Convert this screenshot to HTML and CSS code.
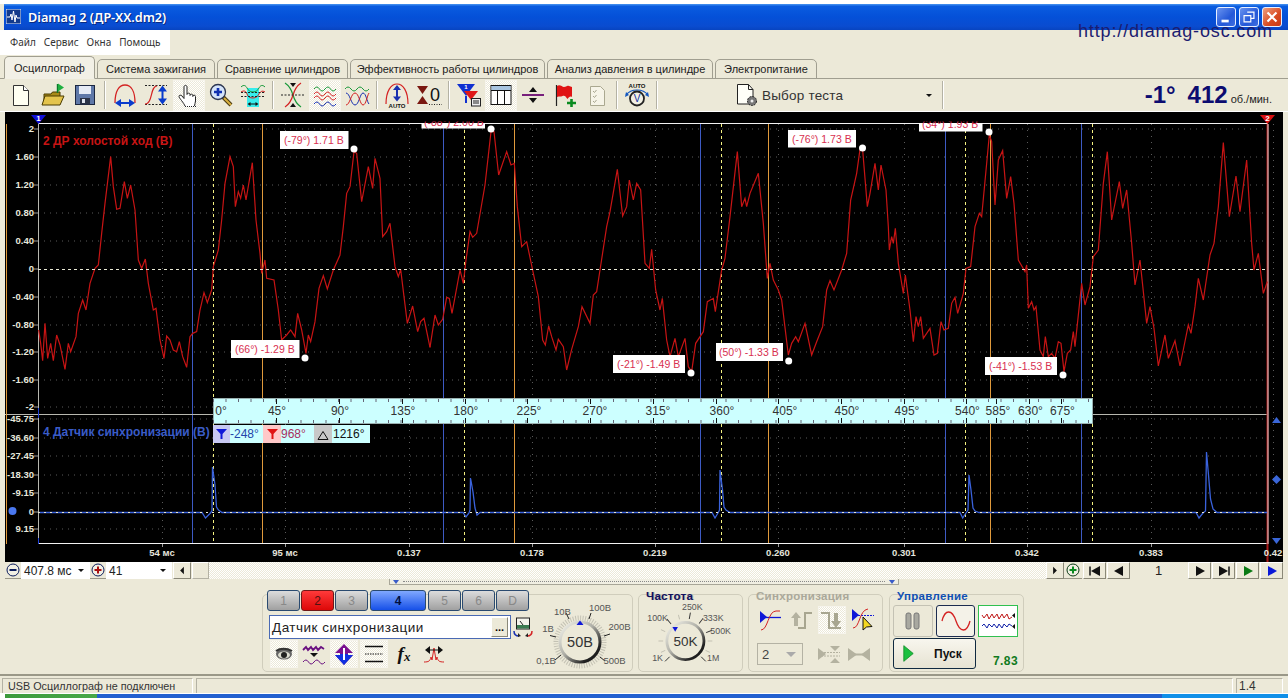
FILE: index.html
```html
<!DOCTYPE html>
<html lang="ru">

<head>
    <meta charset="UTF-8">
    <title>Diamag 2</title>
    <link rel="stylesheet" href="styles.css">
</head>

<body>
    <div class="window">
        <div class="topgap"></div>

        <header class="titlebar">
            <svg class="appicon" viewBox="0 0 15 15">
                <rect width="15" height="15" fill="#123a8c" stroke="#dfe8ff"/>
                <path d="M1 8h3l1-3 1 6 1.500-9 1.500 11 1-7 1 3h3" fill="none" stroke="#fff"/>
            </svg>
            <span class="apptitle">Diamag 2 (ДР-ХХ.dm2)</span>
            <div class="winbtns">
                <button class="winbtn"><svg viewBox="0 0 20 20"><rect x="5" y="13" width="8" height="3" fill="#fff"/></svg></button>
                <button class="winbtn"><svg viewBox="0 0 20 20"><path d="M8 4.500h7.500v7H12M4.500 8.500H12v7H4.500z" fill="none" stroke="#fff" stroke-width="1.300"/></svg></button>
                <button class="winbtn close"><svg viewBox="0 0 20 20"><path d="M5 5l10 10M15 5L5 15" stroke="#fff" stroke-width="2.400"/></svg></button>
            </div>
        </header>
        <a class="siteurl">http://diamag-osc.com</a>

        <div class="menubar">
            <nav class="menu">
                <span>Файл</span>
                <span>Сервис</span>
                <span>Окна</span>
                <span>Помощь</span>
            </nav>
        </div>

        <div class="tabs">
            <div class="tab valgt">Осциллограф</div>
            <div class="tab">Система зажигания</div>
            <div class="tab">Сравнение цилиндров</div>
            <div class="tab">Эффективность работы цилиндров</div>
            <div class="tab">Анализ давления в цилиндре</div>
            <div class="tab">Электропитание</div>
        </div>

        <div class="toolbar">
            <div class="tool"><svg viewBox="0 0 26 26"><path d="M5.500 3.500h10l5 5v15h-15z" fill="#fffff2" stroke="#333"/><path d="M15.500 3.500v5h5" fill="#fff" stroke="#333"/></svg></div>
            <div class="tool"><svg viewBox="0 0 26 26"><path d="M4 22v-10h7l1.500-2H20v12z" fill="#a88a18" stroke="#4a3c00"/><path d="M2 23l3-9h19l-4 9z" fill="#e4c44c" stroke="#4a3c00"/><path d="M17.500 2v9" stroke="#0a7a2a" stroke-width="1.400"/><path d="M18 1.500l6 4-6 4z" fill="#20b040"/></svg></div>
            <div class="tool"><svg viewBox="0 0 26 26"><rect x="3.500" y="3.500" width="19" height="19" fill="#5f78a8" stroke="#1c2740"/><rect x="7" y="4" width="12" height="8" fill="#e6ebf5"/><rect x="8" y="16" width="10" height="6.500" fill="#2b3347"/><rect x="10" y="17" width="3" height="4" fill="#dfe4ee"/></svg></div>
            <span class="sep"></span>
            <div class="tool"><svg viewBox="0 0 26 26"><path d="M3 21C3 9 7 3 13 3s10 6 10 18" fill="none" stroke="#d42222" stroke-width="1.300"/><path d="M7 21h12" stroke="#0a3ccc" stroke-width="2"/><path d="M3 21l6-4v8zM23 21l-6-4v8z" fill="#0a3ccc"/></svg></div>
            <div class="tool"><svg viewBox="0 0 26 26"><path d="M1 3.500h22M1 22.500h22" stroke="#222" stroke-dasharray="2 1.500"/><path d="M1 22c8 0 5-18 12-18" fill="none" stroke="#d42222" stroke-width="1.200"/><path d="M18.500 8v10" stroke="#0a3ccc" stroke-width="2"/><path d="M18.500 3.500l4.500 6h-9zM18.500 22.500l4.500-6h-9z" fill="#0a3ccc"/></svg></div>
            <div class="tool presset"><svg viewBox="0 0 26 26"><path d="M9 24C8 21 3 16 3 14.500c0-1.500 2-1.800 3-.5l2 2.500V5c0-2.200 3-2.200 3 0v7.500c0-1.800 3-1.800 3 0v1c0-1.800 2.800-1.800 2.800 0v1c0-1.800 2.700-1.800 2.700 0V19c0 2-1 3-1 5" fill="#fff" stroke="#222"/><path d="M9 24.500h11.500" stroke="#222" stroke-dasharray="1 1"/></svg></div>
            <div class="tool"><svg viewBox="0 0 26 26"><path d="M15 15l8 8" stroke="#4a3a10" stroke-width="4"/><path d="M16 16l7 7" stroke="#d8b040" stroke-width="2"/><circle cx="10" cy="10" r="7.500" fill="#d5e4fa" stroke="#2c3650" stroke-width="1.300"/><path d="M10 6v8M6 10h8" stroke="#1030b0" stroke-width="2.600"/></svg></div>
            <div class="tool"><svg viewBox="0 0 26 26"><rect x="7" y="6" width="12" height="19" fill="#38ecec"/><path d="M1 5c3-3 5-1 6 1s3 4 6 4 5-2 6-4 3-4 6-1" fill="none" stroke="#1a9a3a"/><path d="M1 10c3-2 5-1 6 2s3 4 6 4 5-2 6-4 3-4 6-2" fill="none" stroke="#d42222"/><path d="M1 10.500h24M1 14.500h24" stroke="#222" stroke-dasharray="2 1.500"/><path d="M9 22h8" stroke="#111"/><path d="M7.500 22l3-2v4zM18.500 22l-3-2v4z" fill="#111"/></svg></div>
            <span class="sep"></span>
            <div class="tool"><svg viewBox="0 0 26 26"><path d="M5 1c3 2 6 5 8 12s5 10 8 12" fill="none" stroke="#1a9a3a" stroke-width="1.200"/><path d="M21 1c-3 2-6 5-8 12s-5 10-8 12" fill="none" stroke="#d42222" stroke-width="1.200"/><path d="M1 13h24" stroke="#222" stroke-dasharray="2 1.500"/><path d="M10 1h6l-3 4zM10 25h6l-3-4z" fill="#111"/></svg></div>
            <div class="tool presset"><svg viewBox="0 0 26 26"><g fill="none"><path d="M2 7q3-4 5.500 0t5.500 0 5.500 0 5.500 0" stroke="#1a9a3a"/><path d="M2 12q3-4 5.500 0t5.500 0 5.500 0 5.500 0" stroke="#d42222"/><path d="M2 16q3-4 5.500 0t5.500 0 5.500 0 5.500 0" stroke="#d42222"/><path d="M2 22q3-4 5.500 0t5.500 0 5.500 0 5.500 0" stroke="#1830b0"/></g></svg></div>
            <div class="tool"><svg viewBox="0 0 26 26"><g fill="none"><path d="M1 7q3-4 6 0t6 0 6 0 6 0" stroke="#1a9a3a"/><path d="M2 11c4 0 5 12 9 12s5-12 8-12 4 9 6 11" stroke="#1830b0"/><path d="M2 23c4 0 5-12 9-12s5 12 8 12 4-9 6-12" stroke="#d42222"/></g></svg></div>
            <span class="sep"></span>
            <div class="tool"><svg viewBox="0 0 26 26"><path d="M2 22C2 9 7 2 13 2s11 7 11 20" fill="none" stroke="#d42222" stroke-width="1.200"/><path d="M13 6v11" stroke="#1830b0" stroke-width="2"/><path d="M13 3l4 5H9zM13 19.500l4-5H9z" fill="#1830b0"/><text class="tinyauto" x="13" y="26" text-anchor="middle">AUTO</text></svg></div>
            <div class="tool"><svg viewBox="0 0 26 26"><path d="M1 4h11L6.500 12zM1 22h11l-5.500-8z" fill="#7a1810"/><text class="bigzero" x="19" y="19" text-anchor="middle">0</text><path d="M13 22.500h13" stroke="#222" stroke-dasharray="1 1.500"/></svg></div>
            <span class="sep"></span>
            <div class="tool"><svg viewBox="0 0 26 26"><path d="M1 2h18L10 14z" fill="#1030d0"/><path d="M8 9h14l-7 9z" fill="#e01818"/><path d="M10 14v7" stroke="#1030d0" stroke-width="2"/><text class="tinyone" x="10" y="7">1</text><rect x="15.500" y="16.500" width="9" height="7.500" fill="#eee" stroke="#222"/><path d="M18 18v4M20 18v4M22 18v4" stroke="#222"/></svg></div>
            <div class="tool presset"><svg viewBox="0 0 26 26"><rect x="3" y="3.500" width="20" height="19" fill="#fff" stroke="#111"/><rect x="3.500" y="4" width="19" height="4" fill="#a8c4e0"/><path d="M3 8.500h20M9.500 8.500v14M16.500 8.500v14" stroke="#111"/></svg></div>
            <div class="tool"><svg viewBox="0 0 26 26"><path d="M2 13h22" stroke="#78207c" stroke-width="2"/><path d="M13 5l4 5H9zM13 21l4-5H9z" fill="#111"/></svg></div>
            <div class="tool"><svg viewBox="0 0 26 26"><path d="M4.500 3v21" stroke="#222" stroke-width="1.200"/><path d="M5 4c3-2 5 1 7 1s3-2 5-1l3 1v10c-2-1-3 0-4.500 2-2-3-3-4-5-3s-3 0-5.500 1z" fill="#e01414"/><path d="M15 21h9M19.500 17v8" stroke="#0a8a20" stroke-width="2.600"/></svg></div>
            <div class="tool"><svg viewBox="0 0 26 26"><path d="M6.500 4.500h10l4 4v15h-14z" fill="#f6f4e8" stroke="#aaa890"/><path d="M9 9l1.500 1.500 2-2.500M9 14l1.500 1.500 2-2.500M9 19l1.500 1.500 2-2.500" fill="none" stroke="#a8a690"/></svg></div>
            <span class="sep"></span>
            <div class="tool"><svg viewBox="0 0 26 26"><text class="tinyauto" x="13" y="6" text-anchor="middle">AUTO</text><path d="M2 13c3-4 7-5 11-5s8 1 11 5" fill="none" stroke="#1458c0" stroke-width="1.200"/><path d="M1 15l1-5 3 3zM25 15l-1-5-3 3z" fill="#1458c0"/><circle cx="13" cy="16.500" r="7" fill="#f2f0e4" stroke="#222" stroke-width="1.800"/><text class="tinyvolt" x="13" y="20" text-anchor="middle">V</text></svg></div>
            <span class="sep"></span>

            <div class="testselect">
                <svg viewBox="0 0 24 24"><path d="M2.500 1.500h11l4.500 5V21H2.500z" fill="#fffff8" stroke="#222"/><path d="M13.500 1.500v5H18" fill="none" stroke="#222"/><circle cx="17" cy="18" r="4.500" fill="#777" stroke="#222" stroke-dasharray="2 1"/><circle cx="17" cy="18" r="1.500" fill="#eee"/></svg>
                <span class="testname">Выбор теста</span>
                <span class="ddarrow"></span>
            </div>
            <span class="sep"></span>

            <div class="readout">
                <b>-1°</b><b class="rpm">412</b><small>об./мин.</small>
            </div>
        </div>

        <svg class="scope" viewBox="0 112 1288 450">
            <rect x="5" y="112" width="1278" height="450" fill="#000"/>

            <path class="griddot" d="M38 129H1268M38 157H1268M38 185H1268M38 213H1268M38 241H1268M38 297H1268M38 325H1268M38 352H1268M38 380H1268M38 407H1268M38 419H1268M38 438H1268M38 456H1268M38 475H1268M38 493H1268M38 529H1268"/>
            <path class="griddot" d="M162.500 124V543M285.500 124V543M409.500 124V543M532.500 124V543M655.500 124V543M778.500 124V543M904.500 124V543M1027.500 124V543M1151.500 124V543M1273.500 124V543"/>

            <path class="tick" d="M162.500 543v4M285.500 543v4M409.500 543v4M532.500 543v4M655.500 543v4M778.500 543v4M904.500 543v4M1027.500 543v4M1151.500 543v4"/>
            <path class="tick" d="M34 129h4M34 157h4M34 185h4M34 213h4M34 241h4M34 269h4M34 297h4M34 325h4M34 352h4M34 380h4M34 407h4M34 419h4M34 438h4M34 456h4M34 475h4M34 493h4M34 512h4M34 529h4"/>

            <path class="cur-blue" d="M192.500 124V543M443.500 124V543M700.500 124V543M945.500 124V543M1081.500 124V543"/>
            <path class="cur-orange" d="M262.500 124V543M514.500 124V543M768.500 124V543M990.500 124V543"/>
            <path class="cur-yellow" d="M213.500 124V543M464.500 124V543M721.500 124V543M965.500 124V543M1092.500 124V543"/>

            <line class="frame" x1="38" y1="123.500" x2="1268" y2="123.500"/>
            <line class="frame" x1="38" y1="543.500" x2="1268" y2="543.500"/>
            <line class="panelline" x1="38.500" y1="124" x2="38.500" y2="543"/>
            <line class="panelline" x1="5" y1="414.500" x2="1268" y2="414.500"/>
            <line class="cur-orange" x1="6.500" y1="124" x2="6.500" y2="544"/>
            <line class="chanstub" x1="38.500" y1="408" x2="38.500" y2="418"/>
            <line class="chanstub" x1="38.500" y1="538" x2="38.500" y2="544"/>
            <line class="rightred" x1="1267.500" y1="124" x2="1267.500" y2="562"/>
            <line class="rightcore" x1="1268" y1="124" x2="1268" y2="544"/>

            <!-- sporet er ridset af i 3x koordinater -->
            <g class="trace" transform="translate(0 110) scale(.33333)">
                <polyline points="116,660 122,700 128,752 135,640 143,745 152,700 160,752 170,675 180,705 195,778 205,700 212,725 228,680 235,610 248,570 258,600 270,520 285,475 295,465 305,370 315,280 332,140 340,230 350,298 360,295 373,215 382,265 392,225 405,300 415,450 425,475 436,447 445,520 460,600 468,595 480,690 492,745 500,678 510,690 520,720 530,725 538,695 548,740 560,772 570,680 578,670 590,665 600,600 612,548 622,578 635,540 640,470 655,420 665,330 675,220 690,140 700,170 706,290 715,245 722,265 730,225 738,270 757,158 768,330 780,430 785,490 795,450 800,505 822,510 835,600 845,690 860,675 872,660 885,680 893,610 905,660 918,730 925,675 932,695 945,635 957,535 970,497 982,537 1000,480 1020,435 1030,350 1040,250 1050,230 1062,125 1070,130 1085,275 1105,170 1118,235 1125,145 1140,205 1148,380 1160,365 1170,340 1185,470 1195,500 1202,478 1212,560 1222,640 1238,588 1253,665 1262,635 1272,625 1290,712"/>
            </g>
            <g class="trace" transform="translate(430 110) scale(.33333)">
                <polyline points="0,712 15,615 25,645 38,628 50,562 58,565 66,610 90,480 100,520 108,450 120,365 128,382 140,370 165,225 183,65 192,65 206,195 230,125 243,165 253,160 262,290 275,410 290,395 310,490 325,560 338,690 346,705 356,648 365,680 378,720 385,688 400,710 410,780 425,718 445,650 456,590 480,640 490,555 500,545 510,480 530,350 540,305 562,178 578,318 590,290 598,210 610,270 620,220 632,240 645,460 658,475 665,418 677,540 690,600 697,565 710,690 720,740 735,685 745,740 765,685 775,770 785,785 797,700 820,665 832,575 850,565 856,605 875,480 885,445 900,320 922,125 935,290 945,265 950,290 960,250 985,190 1000,340 1012,505 1020,460 1030,510 1045,540 1055,570 1075,735 1085,700 1097,680 1105,695 1125,640 1145,735 1160,695 1178,650 1190,540 1200,512 1212,540 1235,480 1250,430 1262,270 1280,190 1290,118"/>
            </g>
            <g class="trace" transform="translate(860 110) scale(.33333)">
                <polyline points="0,118 8,120 22,290 30,250 45,160 55,240 63,165 78,240 85,350 88,420 95,380 100,400 106,355 115,460 130,550 136,495 150,600 160,695 168,620 175,650 182,620 190,685 210,655 222,735 232,730 243,635 252,660 265,655 275,580 285,562 293,610 310,550 318,475 332,470 345,350 358,310 365,320 388,75 395,95 405,285 415,150 428,122 440,265 452,200 462,280 475,450 495,485 500,465 505,595 515,575 522,600 528,590 540,720 550,740 556,680 565,740 575,730 585,745 595,695 603,700 612,785 622,730 632,720 640,665 645,710 665,520 675,585 690,530 700,440 715,420 730,220 742,125 755,330 778,215 788,295 800,240 815,400 825,525 840,450 850,545 860,640 870,590 882,655 895,768 915,675 925,745 945,692 960,768 985,645 993,670 1005,590 1015,505 1030,570 1050,435 1062,400 1075,290 1090,98 1108,320 1128,198 1140,305 1160,150 1175,400 1182,480 1195,430 1210,550 1222,515"/>
            </g>

            <polyline class="pulse" points="39,512.500 202,512.500 205.500,518 210,513.500 212,511 212.500,467 215,485 216.500,507 218.500,510 222,512.500 463,512.500 466,517 469,513 470,510 470.500,478 473,492 475,508 477,515 480,512.500 712,512.500 715,518 718,513 719.500,510 720,470 722.500,490 724,507 726,510 730,512.500 960,512.500 962.700,518 966,513 968,510 969,475 971,490 973,508 975,511 979,512.500 1196,512.500 1199,518 1203,513 1205.500,511 1206.500,452 1208.500,475 1210.500,499 1213,509 1217,512.500 1267,512.500"/>

            <line class="zerodash" x1="38" y1="269.500" x2="1268" y2="269.500"/>
            <line class="zerodash lower" x1="38" y1="512.500" x2="1268" y2="512.500"/>

            <g class="ylab">
                <text x="34" y="132">2</text>
                <text x="34" y="160">1.60</text>
                <text x="34" y="188">1.20</text>
                <text x="34" y="216">0.80</text>
                <text x="34" y="244">0.40</text>
                <text x="34" y="272">0</text>
                <text x="34" y="300">-0.40</text>
                <text x="34" y="328">-0.80</text>
                <text x="34" y="355">-1.20</text>
                <text x="34" y="383">-1.60</text>
                <text x="34" y="410">-2</text>
                <text x="34" y="422">-45.75</text>
                <text x="34" y="441">-36.60</text>
                <text x="34" y="459">-27.45</text>
                <text x="34" y="478">-18.30</text>
                <text x="34" y="496">-9.15</text>
                <text x="34" y="515">0</text>
                <text x="34" y="532">9.15</text>
            </g>

            <g class="xlab">
                <text x="162" y="556">54 мс</text>
                <text x="285" y="556">95 мс</text>
                <text x="409" y="556">0.137</text>
                <text x="532" y="556">0.178</text>
                <text x="655" y="556">0.219</text>
                <text x="778" y="556">0.260</text>
                <text x="904" y="556">0.301</text>
                <text x="1027" y="556">0.342</text>
                <text x="1151" y="556">0.383</text>
                <text x="1273" y="556">0.42</text>
            </g>

            <text class="chan chan-red" x="43" y="145">2 ДР холостой ход (В)</text>
            <text class="chan chan-blue" x="43" y="436">4 Датчик синхронизации (В)</text>

            <!-- gradskala -->
            <rect class="ruler" x="213.500" y="398.500" width="879" height="25"/>
            <line class="rulertick" x1="213" y1="400.500" x2="1092" y2="400.500"/>
            <line class="rulertick" x1="213" y1="421.500" x2="1092" y2="421.500"/>
            <path class="rulermajor" d="M276.500 399v5M339.500 399v5M402.500 399v5M465.500 399v5M527.500 399v5M590.500 399v5M653.500 399v5M716.500 399v5M778.500 399v5M841.500 399v5M904.500 399v5M966.500 399v5M996.500 399v5M1029.500 399v5M1061.500 399v5M276.500 418v5M339.500 418v5M402.500 418v5M465.500 418v5M527.500 418v5M590.500 418v5M653.500 418v5M716.500 418v5M778.500 418v5M841.500 418v5M904.500 418v5M966.500 418v5M996.500 418v5M1029.500 418v5M1061.500 418v5"/>
            <g class="deg">
                <text x="221" y="415">0°</text>
                <text x="277" y="415">45°</text>
                <text x="340" y="415">90°</text>
                <text x="403" y="415">135°</text>
                <text x="466" y="415">180°</text>
                <text x="529" y="415">225°</text>
                <text x="595" y="415">270°</text>
                <text x="658" y="415">315°</text>
                <text x="722" y="415">360°</text>
                <text x="785" y="415">405°</text>
                <text x="847" y="415">450°</text>
                <text x="907" y="415">495°</text>
                <text x="967.500" y="415">540°</text>
                <text x="998" y="415">585°</text>
                <text x="1030.500" y="415">630°</text>
                <text x="1062.500" y="415">675°</text>
            </g>

            <!-- vinkler under skalaen -->
            <rect x="213" y="425" width="17" height="18" fill="#c8c8f2"/>
            <rect x="230" y="425" width="33" height="18" fill="#ccffff"/>
            <rect x="263" y="425" width="18" height="18" fill="#ffc8c8"/>
            <rect x="281" y="425" width="33" height="18" fill="#ccffff"/>
            <rect x="314" y="425" width="18" height="18" fill="#c8c8c8"/>
            <rect x="332" y="425" width="38" height="18" fill="#ccffff"/>
            <path d="M216 429h11l-4.500 5v5h-2v-5z" fill="#1018d8"/>
            <path d="M267 429h11l-4.500 5v5h-2v-5z" fill="#e01414"/>
            <path d="M318 439.500h10l-5-8z" fill="none" stroke="#111"/>
            <text class="anglet" x="230" y="438" fill="#2244aa">-248°</text>
            <text class="anglet" x="281" y="438" fill="#a83060">968°</text>
            <text class="anglet" x="333" y="438" fill="#111">1216°</text>

            <!-- maerker paa sporet -->
            <g class="marklabel">
                <rect x="280" y="131" width="68.500" height="18"/>
                <rect x="231" y="340" width="68.500" height="18"/>
                <rect x="613" y="355" width="72" height="18"/>
                <rect x="716" y="343" width="67" height="18"/>
                <rect x="788" y="130" width="68" height="17.500"/>
                <rect x="421.500" y="123" width="63.500" height="5.500"/>
                <rect x="919" y="123" width="63.500" height="8.500"/>
                <rect x="985" y="357" width="72" height="18"/>
                <text x="284" y="144">(-79°) 1.71 В</text>
                <text x="235" y="353">(66°) -1.29 В</text>
                <text x="617" y="368">(-21°) -1.49 В</text>
                <text x="719" y="356">(50°) -1.33 В</text>
                <text x="792" y="143">(-76°) 1.73 В</text>
                <text x="989" y="370">(-41°) -1.53 В</text>
                <text x="424" y="126">(-88°) 2.00 В</text>
                <text x="922" y="128">(34°) 1.93 В</text>
            </g>
            <rect x="420" y="112" width="70" height="9.500" fill="#000"/>
            <rect x="916" y="112" width="70" height="9.500" fill="#000"/>
            <g class="markdot">
                <circle cx="354" cy="149" r="3.500"/>
                <circle cx="305" cy="358" r="3.500"/>
                <circle cx="691" cy="373" r="3.500"/>
                <circle cx="788.700" cy="361" r="3.500"/>
                <circle cx="862.500" cy="148" r="3.500"/>
                <circle cx="491" cy="129" r="3.500"/>
                <circle cx="989" cy="132" r="3.500"/>
                <circle cx="1063" cy="375" r="3.500"/>
            </g>

            <!-- kanalflag -->
            <path d="M31 115h15l-7.500 9z" fill="#1010d8"/>
            <text class="flagnum" x="38.500" y="121">1</text>
            <path d="M1260 115h15l-7.500 9z" fill="#d81010"/>
            <text class="flagnum" x="1267.500" y="121">2</text>
            <circle cx="12.500" cy="511" r="4" fill="#4a78f0"/>
            <path d="M1272 423l4.500-6 4.500 6z" fill="#3a66d8"/>
            <path d="M1276.500 475l4.500 4.500-4.500 4.500-4.500-4.500z" fill="#3a66d8"/>
            <path d="M1272 538l4.500 6 4.500-6z" fill="#3a66d8"/>
        </svg>

        <div class="scrollrow">
            <button class="roundbtn"><svg viewBox="0 0 14 14"><circle cx="7" cy="7" r="6" fill="#f2f0e4" stroke="#0b1c5c"/><path d="M3.500 7h7" stroke="#0b1c5c" stroke-width="2"/></svg></button>
            <div class="scrollcombo combo-ms"><span>407.8 мс</span><i class="ddarrow"></i></div>
            <button class="roundbtn"><svg viewBox="0 0 14 14"><circle cx="7" cy="7" r="6" fill="#f2f0e4" stroke="#0b1c5c"/><path d="M3.500 7h7M7 3.500v7" stroke="#a81010" stroke-width="2"/></svg></button>
            <div class="scrollcombo combo-n"><span>41</span><i class="ddarrow"></i></div>
            <button class="rawbtn leftbtn"><svg viewBox="0 0 16 16"><path d="M6 8l4-4v8z" fill="#111"/></svg></button>
            <div class="thumb"></div>
            <div class="track"></div>
            <button class="rawbtn rightbtn"><svg viewBox="0 0 16 16"><path d="M10 8L6 4v8z" fill="#111"/></svg></button>
            <button class="roundbtn greenplus"><svg viewBox="0 0 14 14"><circle cx="7" cy="7" r="6" fill="#f2f0e4" stroke="#0a3a14"/><path d="M3.500 7h7M7 3.500v7" stroke="#0a8a20" stroke-width="2"/></svg></button>
            <button class="navbtn"><svg viewBox="0 0 20 14"><path d="M5 2.500v9" stroke="#111" stroke-width="1.500"/><path d="M6 7l9-5v10z" fill="#111"/></svg></button>
            <button class="navbtn"><svg viewBox="0 0 20 14"><path d="M5 7l9-5v10z" fill="#111"/></svg></button>
            <div class="pagenum">1</div>
            <button class="navbtn"><svg viewBox="0 0 20 14"><path d="M15 7L6 2v10z" fill="#111"/></svg></button>
            <button class="navbtn"><svg viewBox="0 0 20 14"><path d="M15 2.500v9" stroke="#111" stroke-width="1.500"/><path d="M14 7L5 2v10z" fill="#111"/></svg></button>
            <button class="navbtn"><svg viewBox="0 0 20 14"><path d="M15 7L6 2v10z" fill="#0a7a14"/></svg></button>
            <button class="navbtn"><svg viewBox="0 0 20 14"><path d="M15 7L6 2v10z" fill="#0a18d8"/></svg></button>
        </div>

        <div class="panel">
            <div class="splitter">
                <i class="splitarrow"></i>
                <i class="splitdots"></i>
                <i class="splitarrow"></i>
            </div>
            <div class="groups">
                <section class="group group-chan">
                    <div class="chancol">
                        <div class="channels">
                            <button class="chbtn">1</button>
                            <button class="chbtn red">2</button>
                            <button class="chbtn">3</button>
                            <button class="chbtn blue wide">4</button>
                            <button class="chbtn">5</button>
                            <button class="chbtn">6</button>
                            <button class="chbtn">D</button>
                        </div>
                        <div class="chanselect">
                            <div class="chancombo">
                                <span>Датчик синхронизации</span>
                                <button class="dots">...</button>
                            </div>
                            <svg class="meter" viewBox="0 0 20 20"><rect x="3.500" y="1" width="13" height="11" fill="#f4f4ec" stroke="#222"/><rect x="4" y="8" width="12" height="3.500" fill="#3a7a50"/><path d="M10 8l-3-4" stroke="#222"/><path d="M1 14c0 3 2 5 5 5" fill="none" stroke="#1830b0" stroke-width="1.500"/><path d="M19 14c0 3-2 5-5 5" fill="none" stroke="#d42222" stroke-width="1.500"/><path d="M5 16l3 3-3 1zM15 16l-3 3 3 1z" fill="#222"/></svg>
                        </div>
                        <div class="chantools">
                            <div class="smalltool presset"><svg viewBox="0 0 24 24"><ellipse cx="12" cy="12" rx="8" ry="5.500" fill="#666"/><ellipse cx="12" cy="13" rx="6" ry="3.500" fill="#dcdcd0"/><circle cx="12" cy="13" r="3" fill="#222"/><path d="M4 9c4-3 11-3 16 0" fill="none" stroke="#333" stroke-width="2"/></svg></div>
                            <div class="smalltool"><svg viewBox="0 0 24 24"><path d="M1 8l3-3 2 3 3-3 2 3 3-3 2 3 3-3 3 2" fill="none" stroke="#6a1080" stroke-width="1.800"/><path d="M8 11h8l-4 4z" fill="#111"/><path d="M1 20q3-4 5.500 0t5.500 0 5.500 0 5.500 0" fill="none" stroke="#6a1080"/></svg></div>
                            <div class="smalltool presset"><svg viewBox="0 0 24 24"><path d="M12 2l9 9h-5v2h5l-9 10-9-10h5v-2H3z" fill="#7a1090"/><path d="M12 23l-9-10h5v-1h8v1h5z" fill="#1030e0"/><path d="M12 6v12" stroke="#fff" stroke-width="2"/></svg></div>
                            <div class="smalltool presset"><svg viewBox="0 0 24 24"><path d="M3 4.500h18M3 19.500h18" stroke="#111" stroke-width="1.500"/><path d="M3 12h18" stroke="#111" stroke-dasharray="1.500 1"/></svg></div>
                            <div class="smalltool fx"><i>f</i><sub>x</sub></div>
                            <div class="smalltool"><svg viewBox="0 0 24 24"><path d="M2 20c5 0 6-1 7-5l1 3 2-12 2 12 1-3c1 4 2 5 7 5" fill="none" stroke="#d42222"/><path d="M7 8h10" stroke="#111"/><path d="M3 8l5-4v8zM21 8l-5-4v8z" fill="#111"/></svg></div>
                        </div>
                    </div>
                    <svg class="dial dial-volt" viewBox="535 595 97 77">
                        <defs>
                            <linearGradient id="ringfarve" x1="0" y1="0" x2="1" y2="1">
                                <stop offset="0" stop-color="#f8f8f0"/>
                                <stop offset=".45" stop-color="#b0b0a8"/>
                                <stop offset=".8" stop-color="#222"/>
                                <stop offset="1" stop-color="#111"/>
                            </linearGradient>
                        </defs>
                        <circle cx="580" cy="642" r="24" fill="none" stroke="#c4c2b4" stroke-width="5" stroke-dasharray="1 1.500"/>
                        <circle cx="580" cy="642" r="20" fill="#ece9d8" stroke="url(#ringfarve)" stroke-width="3"/>
                        <path d="M561 655l-6 5M556 637l-6-1.500M569 619l-3-6M589 619l2-6M604 636l6-2M600 657l5 4" stroke="#222"/>
                        <path d="M580 620.500l3.500 4.500h-7z" fill="#1018d8"/>
                        <text class="dialvalue" x="580" y="647">50В</text>
                        <g class="diallab">
                            <text x="546" y="664">0,1В</text>
                            <text x="548" y="632">1В</text>
                            <text x="562.500" y="615">10В</text>
                            <text x="600" y="611">100В</text>
                            <text x="619.500" y="630">200В</text>
                            <text x="614.500" y="664">500В</text>
                        </g>
                    </svg>
                </section>

                <section class="group group-freq">
                    <h3 class="legend navy">Частота</h3>
                    <svg class="dial" viewBox="639 602 103 70">
                        <g transform="translate(685 644)">
                            <g class="dialtick">
                                <line y1="-24" y2="-29" transform="rotate(-115)"/>
                                <line y1="-24" y2="-29" transform="rotate(-90)"/>
                                <line y1="-24" y2="-29" transform="rotate(-65)"/>
                                <line y1="-24" y2="-29" transform="rotate(-15)"/>
                                <line y1="-24" y2="-29" transform="rotate(115)"/>
                                <line y1="-24" y2="-29" transform="rotate(90)"/>
                            </g>
                            <g class="dialtick major">
                                <line y1="-24" y2="-31" transform="rotate(-135)"/>
                                <line y1="-24" y2="-31" transform="rotate(-40)"/>
                                <line y1="-24" y2="-31" transform="rotate(10)"/>
                                <line y1="-24" y2="-31" transform="rotate(38)"/>
                                <line y1="-24" y2="-31" transform="rotate(68)"/>
                                <line y1="-24" y2="-31" transform="rotate(135)"/>
                            </g>
                            <circle r="20" fill="#ece9d8" stroke="url(#ringfarve)" stroke-width="3"/>
                            <path d="M-14-17l3 5 3-5z" transform="translate(0 2)" fill="#1018d8"/>
                            <text class="dialvalue" y="5">50K</text>
                        </g>
                        <g class="diallab">
                            <text x="655" y="666">1K</text>
                            <text x="655" y="622">100K</text>
                            <text x="692.500" y="611">250K</text>
                            <text x="715" y="622">333K</text>
                            <text x="723" y="636">500K</text>
                            <text x="715" y="666">1M</text>
                        </g>
                    </svg>
                </section>

                <section class="group group-sync">
                    <h3 class="legend grey">Синхронизация</h3>
                    <div class="syncrow">
                        <div class="smalltool syncbtn"><svg viewBox="0 0 24 24"><path d="M2 3v12l7-6z" fill="#1018d8"/><path d="M2 9.500h21" stroke="#1018d8" stroke-width="1.300"/><path d="M3 22c7 0 7-19 15-19h4" fill="none" stroke="#d42222"/></svg></div>
                        <div class="smalltool syncbtn"><svg viewBox="0 0 24 24"><path d="M9 20h7V5h7" fill="none" stroke="#a8a690" stroke-width="2"/><path d="M7 4l5 6H9v8H5v-8H2z" fill="#b4b2a0"/></svg></div>
                        <div class="smalltool syncbtn presset"><svg viewBox="0 0 24 24"><path d="M1 5h8v15h12" fill="none" stroke="#a8a690" stroke-width="2"/><path d="M16 20l-5-7h3V5h4v8h3z" fill="#a8a690"/></svg></div>
                        <div class="smalltool syncbtn"><svg viewBox="0 0 24 24"><path d="M1 1v12l7-6z" fill="#1018d8"/><path d="M1 7.500h22" stroke="#1018d8" stroke-dasharray="2 1"/><path d="M2 20c7 0 6-18 15-19" fill="none" stroke="#d42222"/><path d="M12 9v13l3.500-3 5.500-.5z" fill="#f4d820" stroke="#111"/></svg></div>
                    </div>
                    <div class="syncrow second">
                        <div class="synccombo"><span>2</span><i class="ddarrow grey"></i></div>
                        <div class="smalltool syncbtn"><svg viewBox="0 0 24 24"><path d="M1 6l8 6-8 6zM3 9l4 3-4 3" fill="#b4b2a0"/><path d="M1 10.500h22M1 14h22" stroke="#b4b2a0" stroke-dasharray="2 1"/><path d="M13 4h10l-5 5zM13 21h10l-5-5z" fill="#b4b2a0"/></svg></div>
                        <div class="smalltool syncbtn"><svg viewBox="0 0 24 24"><path d="M1 6l9 6.500-9 6.500zM23 6l-9 6.500 9 6.500z" fill="#b4b2a0"/><path d="M8 12.500h8" stroke="#b4b2a0" stroke-width="2"/></svg></div>
                    </div>
                </section>

                <section class="group group-ctrl">
                    <h3 class="legend royal">Управление</h3>
                    <div class="ctrlrow">
                        <button class="ctrlbtn flat"><svg viewBox="0 0 24 24"><rect x="5" y="4" width="5" height="16" rx="2" fill="#a8a8a0" stroke="#777"/><rect x="13" y="4" width="5" height="16" rx="2" fill="#a8a8a0" stroke="#777"/></svg></button>
                        <button class="ctrlbtn dark"><svg viewBox="0 0 32 24"><path d="M2 12c3-12 10-12 14 0s11 12 14 0" fill="none" stroke="#d42222" stroke-width="1.300"/></svg></button>
                        <button class="ctrlbtn scopebtn"><svg viewBox="0 0 36 24"><path d="M2 6l2 3 3-4 2 5 3-5 2 4 3-4 2 5 3-5 2 4 3-4 2 5 3-2" fill="none" stroke="#c01818"/><path d="M2 17l2-2 3 4 2-4 3 3 2-3 3 4 2-4 3 4 2-4 3 3 2-3 3 2" fill="none" stroke="#1020a8"/><path d="M35 4v5l-3-2.500zM35 15v5l-3-2.500z" fill="#111"/></svg></button>
                    </div>
                    <div class="ctrlrow lower">
                        <button class="startbtn"><svg viewBox="0 0 14 24"><path d="M1 2l12 10L1 22z" fill="#1cc040" stroke="#0a8a20"/></svg><span>Пуск</span></button>
                        <b class="speed">7.83</b>
                    </div>
                </section>
            </div>
        </div>

        <footer class="statusbar">
            <div class="pane pane-a">USB Осциллограф не подключен</div>
            <div class="pane pane-b"></div>
            <div class="pane pane-c">1.4</div>
        </footer>
        <div class="taskbar"><div class="startstrip"></div><div class="taskstrip"></div></div>
    </div>
</body>

</html>
```

FILE: styles.css
```css
* {
    box-sizing: border-box;
}

html,
body {
    margin: 0;
    height: 698px;
    overflow: hidden;
}

body {
    font-family: "Liberation Sans", Arial, sans-serif;
    font-size: 11px;
    color: #222;
    background-color: #ece9d8;
}

button {
    padding: 0;
    font: inherit;
    background: none;
    border: none;
}

svg {
    display: block;
}

.window {
    position: relative;
    display: flex;
    flex-direction: column;
    width: 1288px;
    height: 698px;
}

.topgap {
    height: 4px;
    background-color: #fff;
}

/* titellinje */
.titlebar {
    display: flex;
    align-items: center;
    height: 26px;
    margin-left: 4px;
    padding-left: 2px;
    background: linear-gradient(#4a96f0 0, #0a5ce0 9%, #0450d8 50%, #0a4cd0 85%, #0844c0 100%);
}

.appicon {
    width: 15px;
    height: 15px;
}

.apptitle {
    margin-left: 7px;
    font-family: "Noto Sans", sans-serif;
    font-size: 12.700px;
    font-weight: 600;
    color: #fff;
    text-shadow: 1px 1px #0a2a80;
}

.winbtns {
    display: flex;
    gap: 3px;
    margin-left: auto;
    margin-right: 6px;
}

.winbtn {
    width: 20px;
    height: 20px;
    border: 1px solid #e8f0ff;
    border-radius: 3px;
    background: linear-gradient(135deg, #6a94f0, #2458d8 60%, #3f6ee0);
}

.winbtn.close {
    background: linear-gradient(135deg, #f0a080, #d84a20 60%, #c83a18);
}

.siteurl {
    position: absolute;
    top: 21px;
    left: 1078px;
    font-size: 18px;
    letter-spacing: .85px;
    color: #1c1c70;
}

/* menu */
.menubar {
    height: 27px;
}

.menu {
    display: flex;
    align-items: center;
    width: 170px;
    height: 25px;
    padding-left: 10px;
    gap: 8px;
    font-family: "Noto Sans", sans-serif;
    font-size: 10px;
    color: #333;
    background-color: #fff;
}

/* faner */
.tabs {
    display: flex;
    align-items: flex-end;
    gap: 2px;
    height: 23px;
    padding-left: 4px;
    border-bottom: 1px solid #a09e90;
}

.tab {
    display: flex;
    align-items: center;
    justify-content: center;
    height: 20px;
    margin-bottom: -1px;
    font-size: 11px;
    white-space: nowrap;
    color: #222;
    border: 1px solid #a09e90;
    border-radius: 5px 5px 0 0;
}

.tab:nth-child(2) {
    width: 118px;
}

.tab:nth-child(3) {
    width: 131px;
}

.tab:nth-child(4) {
    width: 195px;
}

.tab:nth-child(5) {
    width: 166px;
}

.tab:nth-child(6) {
    width: 102px;
}

.tab.valgt {
    width: 91px;
    height: 23px;
    background-color: #f2f0e6;
    border-bottom-color: #f2f0e6;
}

/* vaerktoejslinje */
.toolbar {
    display: flex;
    align-items: center;
    height: 33px;
    padding-left: 5px;
    border-bottom: 1px solid #fff;
}

.tool {
    display: flex;
    align-items: center;
    justify-content: center;
    width: 32px;
    height: 31px;
}

.tool svg {
    width: 26px;
    height: 26px;
}

.presset {
    background: repeating-conic-gradient(#fff 0 25%, #ece9d8 0 50%) 0 0 / 2px 2px;
    border: 1px solid #f6f4ec;
}

.sep {
    width: 2px;
    height: 28px;
    margin: 0 3px;
    background-color: #b4b2a4;
    border-right: 1px solid #fff;
}

.testselect {
    display: flex;
    align-items: center;
    width: 278px;
    padding-left: 74px;
}

.testselect svg {
    width: 24px;
    height: 24px;
}

.testname {
    margin-left: 3px;
    font-size: 13.500px;
    letter-spacing: .2px;
    color: #333;
}

.ddarrow {
    width: 0;
    height: 0;
    margin-left: auto;
    border-top: 3px solid #111;
    border-left: 3.500px solid transparent;
    border-right: 3.500px solid transparent;
}

.testselect .ddarrow {
    margin-right: 7px;
}

.ddarrow.grey {
    border-top-color: #aaa;
    border-left-width: 5px;
    border-right-width: 5px;
    border-top-width: 5px;
}

.readout {
    display: flex;
    align-items: baseline;
    margin-left: auto;
    padding-right: 16px;
    font-size: 24px;
    color: #0c0c70;
}

.readout .rpm {
    margin-left: 12px;
}

.readout small {
    margin-left: 3px;
    font-size: 11px;
    color: #222;
}

/* scope */
.scope {
    width: 1288px;
    height: 450px;
    flex: none;
}

.griddot {
    fill: none;
    stroke: #5a5a5a;
    stroke-dasharray: 1 5;
}

.tick {
    fill: none;
    stroke: #999;
}

.cur-blue {
    fill: none;
    stroke: #3d5ac4;
}

.cur-orange {
    fill: none;
    stroke: #e09a3c;
}

.cur-yellow {
    fill: none;
    stroke: #f4f080;
    stroke-dasharray: 3 3;
}

.frame {
    stroke: #f2f2f2;
}

.panelline {
    stroke: #b8b8b0;
}

.chanstub {
    stroke: #2040d8;
}

.rightred {
    stroke: #a81818;
    stroke-width: 2;
}

.rightcore {
    stroke: #e8d8d8;
}

.trace polyline {
    fill: none;
    stroke: #c81414;
    stroke-width: 1.200;
    vector-effect: non-scaling-stroke;
}

.pulse {
    fill: none;
    stroke: #3a62dc;
    stroke-width: 1.300;
}

.zerodash {
    stroke: #e8e8d4;
    stroke-dasharray: 3 3;
}

.zerodash.lower {
    stroke-dasharray: 2 4;
}

.ylab text {
    font-size: 9.500px;
    font-weight: 700;
    text-anchor: end;
    fill: #e8e8dc;
}

.xlab text {
    font-size: 9.500px;
    font-weight: 700;
    text-anchor: middle;
    fill: #e4e4dc;
}

.chan {
    font-size: 12px;
    font-weight: 700;
}

.chan-red {
    fill: #c81414;
}

.chan-blue {
    fill: #3a5cc8;
}

.ruler {
    fill: #ccffff;
    stroke: #9ab0b0;
}

.rulertick {
    stroke: #667;
    stroke-width: 3;
    stroke-dasharray: 1 11.500;
}

.rulermajor {
    fill: none;
    stroke: #111;
}

.deg text {
    font-size: 12px;
    text-anchor: middle;
    fill: #333;
}

.anglet {
    font-size: 12px;
}

.marklabel rect {
    fill: #fff;
}

.marklabel text {
    font-size: 10.500px;
    fill: #d83050;
}

.markdot circle {
    fill: #fff;
}

.flagnum {
    font-size: 8px;
    font-weight: 700;
    text-anchor: middle;
    fill: #fff;
}

.tinyauto {
    font-size: 6px;
    font-weight: 700;
    fill: #111;
}

.tinyone {
    font-size: 6px;
    font-weight: 700;
    text-anchor: middle;
    fill: #fff;
}

.tinyvolt {
    font-size: 10px;
    fill: #1030a0;
}

.bigzero {
    font-size: 18px;
    fill: #111;
}

/* rullepanel */
.scrollrow {
    display: flex;
    height: 17px;
    flex: none;
    padding: 0 5px;
}

.roundbtn {
    display: flex;
    align-items: center;
    justify-content: center;
    width: 16px;
    height: 17px;
    background-color: #ece9d8;
    border-bottom: 1px solid #9a9888;
}

.roundbtn svg {
    width: 14px;
    height: 14px;
}

.scrollcombo {
    display: flex;
    align-items: center;
    height: 17px;
    padding: 0 6px 0 3px;
    font-size: 12px;
    color: #222;
    background-color: #fff;
}

.combo-ms {
    width: 69px;
}

.combo-n {
    width: 66px;
    margin-right: 1px;
}

.rawbtn {
    display: flex;
    align-items: center;
    justify-content: center;
    width: 18px;
    height: 17px;
    background-color: #ece9d8;
    border: 1px solid;
    border-color: #fff #8a8878 #8a8878 #fff;
}

.rawbtn svg {
    width: 16px;
    height: 15px;
}

.leftbtn {
    margin-right: 1px;
}

.thumb {
    width: 17px;
    height: 17px;
    background-color: #ece9d8;
    border: 1px solid;
    border-color: #fff #b4b2a4 #b4b2a4 #fff;
}

.track {
    flex: 1;
    background: repeating-conic-gradient(#fff 0 25%, #ece9d8 0 50%) 0 0 / 2px 2px;
}

.greenplus {
    width: 18px;
}

.navbtn {
    display: flex;
    align-items: center;
    justify-content: center;
    width: 23px;
    height: 17px;
    margin-left: 1px;
    background-color: #ece9d8;
    border: 1px solid;
    border-color: #fff #8a8878 #8a8878 #fff;
}

.navbtn svg {
    width: 20px;
    height: 14px;
}

.pagenum {
    width: 57px;
    font-size: 13px;
    line-height: 17px;
    text-align: center;
}

/* nederste panel */
.panel {
    height: 95px;
    flex: none;
}

.splitter {
    display: flex;
    align-items: center;
    gap: 4px;
    width: 510px;
    height: 6px;
    margin-left: 389px;
    padding: 0 3px;
    background-color: #f0eee2;
    border: 1px solid #a8a698;
    border-top: none;
}

.splitarrow {
    width: 0;
    height: 0;
    border-top: 4px solid #3a5cc8;
    border-left: 3.500px solid transparent;
    border-right: 3.500px solid transparent;
}

.splitdots {
    flex: 1;
    height: 1px;
    border-top: 1px dotted #888;
}

.groups {
    display: flex;
    gap: 5px;
    height: 78px;
    margin: 9px 0 0 262px;
}

.group {
    height: 78px;
    border: 1px solid #d0cdbc;
    border-radius: 5px;
}

.group-chan {
    display: flex;
    width: 371px;
    padding-left: 4px;
}

.group-freq {
    width: 105px;
}

.group-sync {
    width: 135px;
    padding-left: 7px;
}

.group-ctrl {
    width: 135px;
    margin-left: 1px;
    padding-left: 3px;
}

.legend {
    height: 12px;
    margin: -5px 0 0 0;
    font-size: 11.500px;
    line-height: 12px;
    font-weight: 700;
    letter-spacing: .3px;
    white-space: nowrap;
}

.legend.navy {
    margin-left: 7px;
    color: #101060;
    text-shadow: 1px 0 #b8b6a8;
}

.legend.grey {
    color: #aaa89a;
}

.legend.royal {
    margin-left: 4px;
    color: #1050b4;
}

.chancol {
    width: 268px;
    margin-top: -5px;
}

.channels {
    display: flex;
    gap: 1px;
}

.chbtn {
    width: 33px;
    height: 21px;
    font-size: 12px;
    color: #888;
    background: linear-gradient(#dcdcdc, #a0a0a0);
    border: 1px solid #2a4a70;
    border-radius: 3px;
}

.chbtn.red {
    color: #501010;
    background: linear-gradient(#ff3a3a, #dd0808);
    border-color: #701818;
}

.chbtn.blue {
    font-weight: 700;
    color: #001040;
    background: linear-gradient(#80a8ff, #1650e8);
}

.chbtn.wide {
    width: 56px;
    margin: 0 1px;
}

.chanselect {
    display: flex;
    align-items: center;
    margin-top: 4px;
}

.chancombo {
    display: flex;
    align-items: center;
    justify-content: space-between;
    width: 242px;
    height: 24px;
    margin-left: 2px;
    padding: 0 2px 0 2px;
    font-size: 13.500px;
    letter-spacing: .5px;
    color: #222;
    background-color: #fff;
    border: 1px solid #4a6ab4;
}

.dots {
    width: 17px;
    height: 20px;
    font-size: 11px;
    font-weight: 700;
    line-height: 14px;
    background-color: #ece9d8;
    border: 1px solid;
    border-color: #fff #8a8878 #8a8878 #fff;
}

.meter {
    width: 20px;
    height: 20px;
    margin-left: 2px;
}

.chantools {
    display: flex;
    gap: 2px;
    margin: 1px 0 0 3px;
}

.smalltool {
    display: flex;
    align-items: center;
    justify-content: center;
    width: 28px;
    height: 28px;
}

.smalltool svg {
    width: 24px;
    height: 24px;
}

.fx {
    font-family: "Liberation Serif", serif;
    font-size: 19px;
    font-weight: 700;
    color: #111;
}

.fx sub {
    margin-top: 6px;
    font-size: 13px;
    font-style: italic;
}

.dial {
    flex: none;
    width: 97px;
    height: 77px;
}

.group-freq .dial {
    width: 103px;
    height: 65px;
    overflow: visible;
}

.dialtick line {
    stroke: #c0beb0;
}

.dialtick.major line {
    stroke: #333;
}

.dialvalue {
    font-size: 14.500px;
    text-anchor: middle;
    fill: #333;
}

.diallab text {
    font-size: 9.500px;
    text-anchor: middle;
    fill: #555;
}

.syncrow {
    display: flex;
    gap: 3px;
    margin-top: 4px;
}

.syncrow.second {
    gap: 2px;
    align-items: center;
    margin-top: 6px;
}

.synccombo {
    display: flex;
    align-items: center;
    width: 46px;
    height: 22px;
    margin: 0 10px 0 1px;
    padding: 0 6px 0 4px;
    font-size: 13px;
    color: #444;
    border: 1px solid #b4b2a4;
}

.ctrlrow {
    display: flex;
    gap: 3px;
    margin-top: 3px;
}

.ctrlrow.lower {
    align-items: flex-end;
    gap: 17px;
    margin-top: 1px;
}

.ctrlbtn {
    display: flex;
    align-items: center;
    justify-content: center;
    width: 40px;
    height: 32px;
}

.ctrlbtn.flat {
    border: 1px solid #c4c2b4;
    border-radius: 3px;
}

.ctrlbtn.dark {
    width: 39px;
    background-color: #f4f2e8;
    border: 1px solid #1c2c50;
    border-radius: 3px;
}

.ctrlbtn.scopebtn {
    background-color: #fff;
    border: 1px solid #30c050;
}

.ctrlbtn.flat svg {
    width: 24px;
    height: 24px;
}

.ctrlbtn.dark svg {
    width: 32px;
    height: 24px;
}

.ctrlbtn.scopebtn svg {
    width: 36px;
    height: 24px;
}

.startbtn {
    display: flex;
    align-items: center;
    width: 83px;
    height: 31px;
    padding-left: 9px;
    font-size: 12px;
    font-weight: 700;
    color: #111;
    background: linear-gradient(#f8f6ee, #e6e3d2);
    border: 1px solid #102a40;
    border-radius: 3px;
}

.startbtn svg {
    width: 11px;
    height: 19px;
}

.startbtn span {
    margin-left: 20px;
}

.speed {
    margin-bottom: 1px;
    font-size: 12px;
    letter-spacing: .4px;
    color: #107a20;
}

/* statuslinje */
.statusbar {
    display: flex;
    gap: 3px;
    height: 19px;
    flex: none;
    padding: 2px 5px 0 2px;
    border-top: 2px solid #9a9888;
}

.pane {
    height: 16px;
    padding-left: 5px;
    font-size: 10.800px;
    line-height: 15px;
    color: #333;
    border-top: 1px solid #b4b2a4;
    border-left: 1px solid #b4b2a4;
    border-right: 1px solid #fff;
    white-space: nowrap;
}

.pane-a {
    width: 191px;
}

.pane-b {
    flex: 1;
}

.pane-c {
    width: 47px;
    padding-left: 2px;
    font-size: 12px;
}

.taskbar {
    display: flex;
    height: 5px;
    padding-top: 1px;
    background-color: #fff;
}

.startstrip {
    width: 97px;
    margin-left: 0;
    background: linear-gradient(90deg, #fff 5px, #3c9a3c 5px, #48a848);
}

.taskstrip {
    flex: 1;
    background: linear-gradient(90deg, #2260d0 0, #2260d0 1065px, #1090e8 1065px);
}
```
